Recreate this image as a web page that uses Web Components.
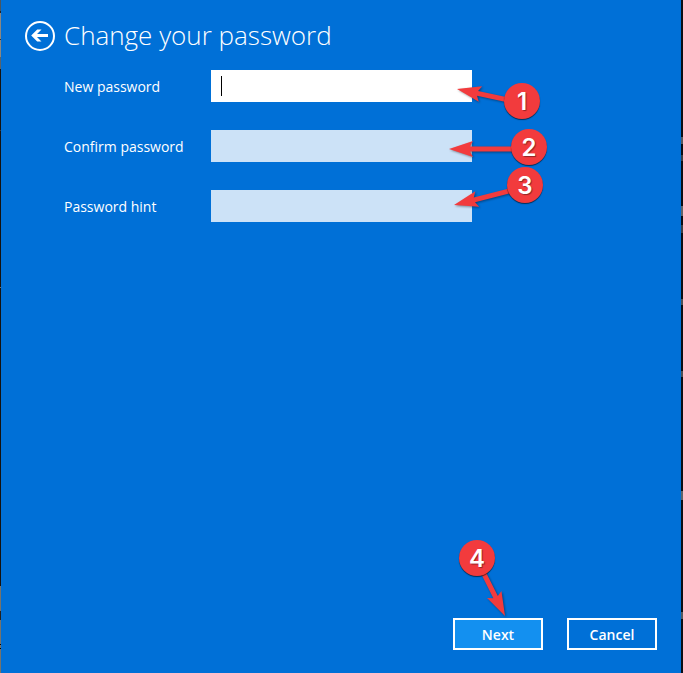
<!DOCTYPE html>
<html lang="en">
<head>
<meta charset="utf-8">
<meta name="viewport" content="width=device-width, initial-scale=1">
<title>Change your password</title>
<style>
  body {
    margin: 0;
    background: #0b0d14;
    color: #ffffff;
    font-family: 'Open Sans', 'Noto Sans', sans-serif;
    font-size: 14px;
  }
</style>
</head>
<body>
<password-screen>
  <screen-header slot="header">Change your password</screen-header>
  <password-field label="New password" type="password" active>
    <step-callout number="1" tip-x="-65" tip-y="-12" style="--x: 311px; --y: 31px"></step-callout>
  </password-field>
  <password-field label="Confirm password" type="password">
    <step-callout number="2" tip-x="-80" tip-y="2" style="--x: 318px; --y: 17px"></step-callout>
  </password-field>
  <password-field label="Password hint" type="text">
    <step-callout number="3" tip-x="-71" tip-y="20" style="--x: 314px; --y: -5px"></step-callout>
  </password-field>
  <screen-button slot="actions" primary>Next
    <step-callout slot="callout" number="4" tip-x="28" tip-y="58" style="--x: 24px; --y: -60px"></step-callout>
  </screen-button>
  <screen-button slot="actions">Cancel</screen-button>
</password-screen>

<script>
const screenTemplate = document.createElement('template');

screenTemplate.innerHTML = `
  <style>
    :host {
      display: grid;
      grid-template-columns: 1px 1fr 2px;
      min-height: 100vh;
    }

    /* slivers of the desktop behind the dialog */
    .left {
      background: linear-gradient(#49565f 0 11px, #222222 11px 13px, #8b8780 13px 39px,
        #333333 39px 40px, #8b8780 40px 57px, #59636a 57px 69px, #15120f 69px 130px,
        #3a3734 130px 131px, #15120f 131px 287px, #77736e 287px 288px, #15120f 288px 586px,
        #77736a 586px 611px, #24211e 611px 620px, #77736a 620px 644px, #000000 644px 645px,
        #77736a 645px 648px, #000000 648px 649px, #77736a 649px);
    }

    .right {
      background: linear-gradient(#0b0d14 0 137px, #55585f 137px 144px, #0b0d14 144px 155px,
        #3a3d44 155px 161px, #0b0d14 161px 206px, #606369 206px 216px, #0b0d14 216px 225px,
        #3a3d44 225px 233px, #0b0d14 233px 299px, #4c4f55 299px 305px, #0b0d14 305px 371px,
        #4c4f55 371px 377px, #0b0d14 377px 491px, #606369 491px 500px, #0b0d14 500px 612px,
        #55585f 612px 619px, #0b0d14 619px);
    }

    main {
      display: flex;
      flex-direction: column;
      background: #0070d7;
    }

    .fields {
      display: grid;
      gap: 28px;
      padding: 19px 24px 24px 63px;
    }

    footer {
      display: flex;
      justify-content: flex-end;
      gap: 24px;
      margin-top: auto;
      padding: 24px 24px 23px;
    }
  </style>

  <div class="left"></div>
  <main>
    <slot name="header"></slot>
    <div class="fields"><slot></slot></div>
    <footer><slot name="actions"></slot></footer>
  </main>
  <div class="right"></div>
`

class PasswordScreen extends HTMLElement {
  constructor() {
    super();
    this.attachShadow({ mode: 'open' }).appendChild(screenTemplate.content.cloneNode(true));
  }
}

const headerTemplate = document.createElement('template');

headerTemplate.innerHTML = `
  <style>
    :host {
      display: flex;
      align-items: flex-start;
      gap: 9px;
      padding: 21px 24px 0;
    }

    button {
      width: 30px;
      height: 30px;
      padding: 0;
      border: none;
      background: none;
      color: inherit;
    }

    svg {
      display: block;
    }

    h1 {
      margin: 0;
      font-size: 26px;
      font-weight: 300;
      line-height: 28px;
    }
  </style>

  <button aria-label="Back">
    <svg width="30" height="30" viewBox="0 0 30 30" fill="none" stroke="currentColor">
      <circle cx="15" cy="15" r="14" stroke-width="2"/>
      <path d="M9 14.5H23" stroke-width="3"/>
      <path d="M12.2 8.5H16.5L10.5 14.5L16.5 20.5H12.2L6.2 14.5Z" fill="currentColor" stroke="none"/>
    </svg>
  </button>
  <h1><slot></slot></h1>
`

class ScreenHeader extends HTMLElement {
  constructor() {
    super();
    this.attachShadow({ mode: 'open' }).appendChild(headerTemplate.content.cloneNode(true));
  }
}

const fieldTemplate = document.createElement('template');

fieldTemplate.innerHTML = `
  <style>
    :host {
      display: grid;
      grid-template-columns: 147px minmax(0, 261px);
      align-items: center;
    }

    .box {
      position: relative;
    }

    input {
      display: block;
      box-sizing: border-box;
      width: 100%;
      height: 32px;
      padding: 0 10px;
      border: none;
      border-radius: 0;
      outline: none;
      background: #cce2f7;
      color: #000000;
      font: inherit;
    }

    :host([active]) input {
      background: #ffffff;
      caret-color: transparent;
    }

    .caret {
      display: none;
      position: absolute;
      left: 10px;
      top: 6px;
      width: 1px;
      height: 20px;
      background: #000000;
    }

    :host([active]) .caret {
      display: block;
    }
  </style>

  <label for="field"></label>
  <div class="box">
    <input id="field">
    <span class="caret"></span>
    <slot></slot>
  </div>
`

class PasswordField extends HTMLElement {
  constructor() {
    super();
    this.attachShadow({ mode: 'open' }).appendChild(fieldTemplate.content.cloneNode(true));
  }

  connectedCallback() {
    this.shadowRoot.querySelector('label').textContent = this.getAttribute('label');
    this.shadowRoot.querySelector('input').type = this.getAttribute('type');
  }
}

const buttonTemplate = document.createElement('template');

buttonTemplate.innerHTML = `
  <style>
    :host {
      display: block;
      position: relative;
    }

    button {
      display: block;
      min-width: 90px;
      height: 32px;
      padding: 0 12px;
      border: 2px solid #ffffff;
      background: transparent;
      color: inherit;
      font: inherit;
      font-weight: 600;
    }

    :host([primary]) button {
      background: #1390f0;
    }
  </style>

  <button><slot></slot></button>
  <slot name="callout"></slot>
`

class ScreenButton extends HTMLElement {
  constructor() {
    super();
    this.attachShadow({ mode: 'open' }).appendChild(buttonTemplate.content.cloneNode(true));
  }
}

const calloutTemplate = document.createElement('template');

calloutTemplate.innerHTML = `
  <style>
    /* --x and --y give the centre of the badge */
    :host {
      position: absolute;
      left: var(--x);
      top: var(--y);
      width: 0;
      height: 0;
      z-index: 1;
      pointer-events: none;
    }

    svg {
      position: absolute;
      overflow: visible;
      filter: drop-shadow(1px 1px 1px rgba(0, 0, 0, 0.4));
    }

    span {
      position: absolute;
      left: -18px;
      top: -18px;
      width: 36px;
      height: 36px;
      border-radius: 50%;
      background: #f23b3d;
      box-shadow: 0 1px 1px rgba(0, 0, 0, 0.6);
      font-family: Inter, 'Liberation Sans', sans-serif;
      font-size: 24px;
      font-weight: 600;
      line-height: 37px;
      text-align: center;
      text-shadow: 1px 1px 1px rgba(0, 0, 0, 0.4);
    }
  </style>

  <svg width="1" height="1" fill="#f23b3d"><path/></svg>
  <span></span>
`

// the arrow leaves the badge a little below its centre
const ARROW_START = 2;

class StepCallout extends HTMLElement {
  constructor() {
    super();
    this.attachShadow({ mode: 'open' }).appendChild(calloutTemplate.content.cloneNode(true));
  }

  connectedCallback() {
    const x = Number(this.getAttribute('tip-x'));
    const y = Number(this.getAttribute('tip-y')) - ARROW_START;
    const length = Math.hypot(x, y);
    const angle = Math.atan2(y, x) * 180 / Math.PI;
    const path = this.shadowRoot.querySelector('path');
    path.setAttribute('d', `M0 -2.5H${length - 21}L${length - 24} -8L${length} 0L${length - 24} 8L${length - 21} 2.5H0Z`);
    path.setAttribute('transform', `translate(0 ${ARROW_START}) rotate(${angle})`);
    this.shadowRoot.querySelector('span').textContent = this.getAttribute('number');
  }
}

customElements.define('password-screen', PasswordScreen);
customElements.define('screen-header', ScreenHeader);
customElements.define('password-field', PasswordField);
customElements.define('screen-button', ScreenButton);
customElements.define('step-callout', StepCallout);
</script>
</body>
</html>
